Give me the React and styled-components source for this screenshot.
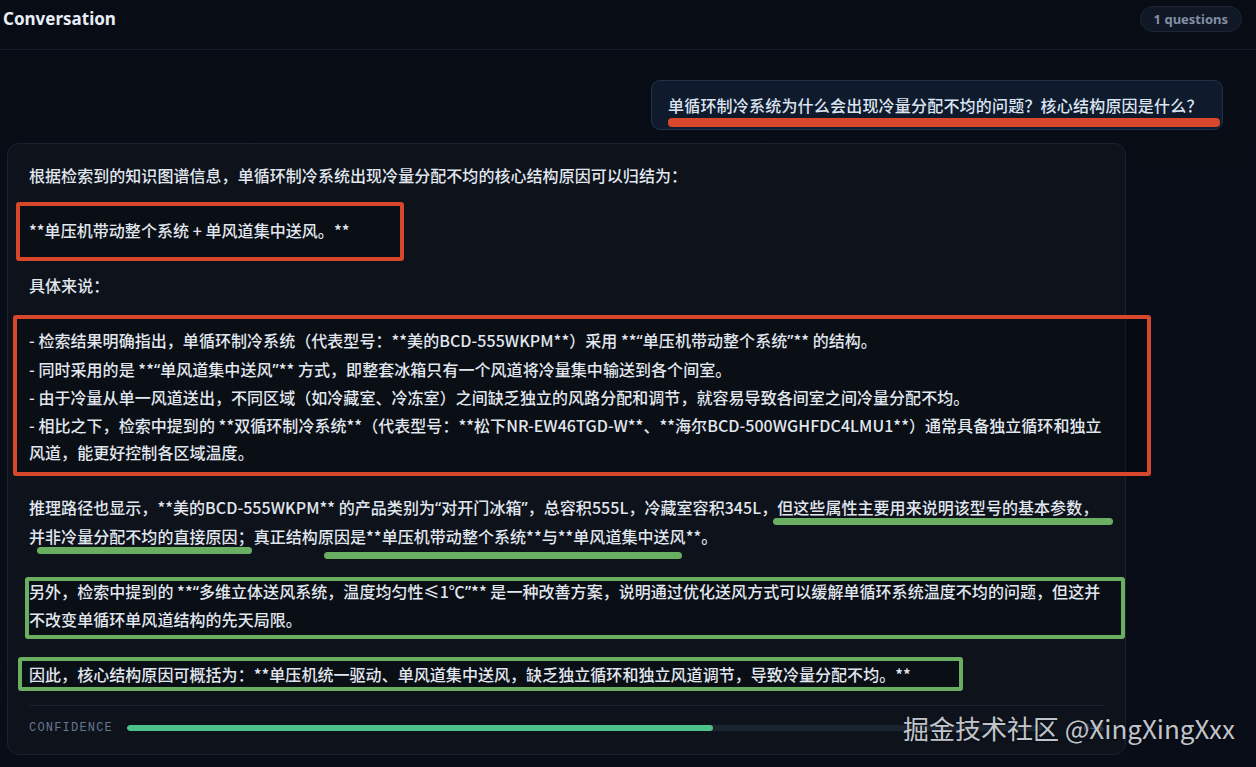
import styled, { createGlobalStyle } from 'styled-components'

const GlobalStyle = createGlobalStyle`
  html, body {
    margin: 0;
    padding: 0;
    background: #080c15;
  }
  body {
    font-family: "Noto Sans CJK SC", "Noto Sans", sans-serif;
    color: #e1e7ef;
  }
`

const Page = styled.div`
  position: relative;
  min-height: 767px;
  overflow: hidden;
  background: linear-gradient(180deg, #080c15 0%, #090d17 100%);
`

const Header = styled.header`
  height: 50px;
  display: flex;
  align-items: center;
  justify-content: space-between;
  padding: 0 14px 12px 3px;
  border-bottom: 1px solid #151c28;
  box-sizing: border-box;
`

const Title = styled.h1`
  margin: 0;
  font-family: "Noto Sans", "Open Sans", sans-serif;
  font-size: 17px;
  font-weight: 700;
  color: #e8eef7;
`

const Badge = styled.span`
  height: 26px;
  display: inline-flex;
  align-items: center;
  padding: 0 13px;
  box-sizing: border-box;
  border-radius: 13px;
  background: #101725;
  border: 1px solid #1c2536;
  color: #8290a7;
  font-family: "Noto Sans", "Open Sans", sans-serif;
  font-size: 13px;
  font-weight: 700;
`

const Thread = styled.main`
  display: flex;
  flex-direction: column;
  gap: 13px;
  padding: 30px 33px 0 7px;
`

const UserBubble = styled.div`
  position: relative;
  align-self: flex-end;
  height: 50px;
  display: flex;
  align-items: center;
  padding: 0 16px;
  box-sizing: border-box;
  width: 572px;
  border-radius: 9px;
  background: #0f1a2d;
  border: 1px solid #21314a;
  color: #dbe4f1;
  font-size: 16px;
  font-weight: 500;
  letter-spacing: 0.2px;
`

const Card = styled.section`
  margin-right: 97px;
  border: 1px solid #1a2230;
  border-radius: 12px;
  background: #0d121b;
  padding: 18px 21px 0 21px;
  min-height: 611px;
  box-sizing: border-box;
  display: flex;
  flex-direction: column;
`

const Para = styled.div`
  position: relative;
  isolation: isolate;
  margin: 0 0 ${p => p.$gap ?? 27.5}px;
  font-size: 16px;
  font-weight: 500;
  letter-spacing: 0.05px;
  line-height: 27.5px;
  white-space: nowrap;
  color: #e1e7ef;
`

// latin curly quotes, narrower than the CJK full-width ones
const Q = styled.span`
  font-family: "Noto Sans", "Liberation Sans", sans-serif;
`

const Frame = styled.span`
  position: absolute;
  z-index: -1;
  top: ${p => p.$top}px;
  bottom: ${p => p.$bottom}px;
  left: ${p => p.$left}px;
  ${p => (p.$width ? `width: ${p.$width}px;` : `right: ${p.$right}px;`)}
  border: 4px solid ${p => p.$color};
  border-radius: 3px;
  background: rgba(0, 0, 0, 0.22);
  pointer-events: none;
`

const Stroke = styled.span`
  position: absolute;
  top: ${p => p.$top}px;
  left: ${p => p.$left}px;
  width: ${p => p.$width}px;
  height: 7px;
  border-radius: 4px;
  background: ${p => p.$color};
  pointer-events: none;
`

const BubbleStroke = styled.span`
  position: absolute;
  left: 16px;
  right: 2px;
  bottom: 2px;
  height: 9px;
  border-radius: 4px;
  background: #d8482c;
`

const Footer = styled.div`
  border-top: 1px solid #19212e;
  padding: 13px 1px 17px 0;
  display: flex;
  align-items: center;
  gap: 14px;
`

const MetaLabel = styled.span`
  font-family: "Liberation Mono", "DejaVu Sans Mono", monospace;
  font-size: 12px;
  letter-spacing: 1.2px;
  color: #66768f;
  line-height: 18px;
`

const Track = styled.div`
  flex: 1;
  height: 6px;
  border-radius: 3px;
  background: #1c2430;
  overflow: hidden;
`

const Fill = styled.div`
  height: 100%;
  border-radius: 3px;
  background: #4cc28a;
`

const Percent = styled.span`
  margin-left: 20px;
  font-family: "Liberation Mono", "DejaVu Sans Mono", monospace;
  font-size: 11px;
  color: #4b5b75;
  width: 26px;
  text-align: right;
`

const Watermark = styled.div`
  position: absolute;
  right: 21px;
  top: 710px;
  font-family: "Noto Sans CJK SC", "Noto Sans", sans-serif;
  font-size: 26px;
  line-height: 36px;
  color: rgba(236, 240, 246, 0.82);
  text-shadow: 0 0 2px rgba(0, 0, 0, 0.5);
  white-space: nowrap;
  pointer-events: none;
`

const RED = '#d6472b'
const GREEN = '#6aae62'
const confidence = 0.64

export default function App() {
  return (
    <>
      <GlobalStyle />
      <Page>
        <Header>
          <Title>Conversation</Title>
          <Badge>1 questions</Badge>
        </Header>
        <Thread>
          <UserBubble>
            单循环制冷系统为什么会出现冷量分配不均的问题？核心结构原因是什么？
            <BubbleStroke />
          </UserBubble>

          <Card>
            <Para>根据检索到的知识图谱信息，单循环制冷系统出现冷量分配不均的核心结构原因可以归结为：</Para>

            <Para>
              <Frame $color={RED} $top={-15} $bottom={-16} $left={-13} $width={380} />
              **单压机带动整个系统 + 单风道集中送风。**
            </Para>

            <Para>具体来说：</Para>

            <Para>
              <Frame $color={RED} $top={-12} $bottom={-9} $left={-16} $right={-47} />
              - 检索结果明确指出，单循环制冷系统（代表型号：**美的BCD-555WKPM**）采用 **<Q>“</Q>单压机带动整个系统<Q>”</Q>** 的结构。<br />
              - 同时采用的是 **<Q>“</Q>单风道集中送风<Q>”</Q>** 方式，即整套冰箱只有一个风道将冷量集中输送到各个间室。<br />
              - 由于冷量从单一风道送出，不同区域（如冷藏室、冷冻室）之间缺乏独立的风路分配和调节，就容易导致各间室之间冷量分配不均。<br />
              - 相比之下，检索中提到的 **双循环制冷系统**（代表型号：**松下NR-EW46TGD-W**、**海尔BCD-500WGHFDC4LMU1**）通常具备独立循环和独立<br />
              风道，能更好控制各区域温度。
            </Para>

            <Para>
              推理路径也显示，**美的BCD-555WKPM** 的产品类别为<Q>“</Q>对开门冰箱<Q>”</Q>，总容积555L，冷藏室容积345L，但这些属性主要用来说明该型号的基本参数，<br />
              并非冷量分配不均的直接原因；真正结构原因是**单压机带动整个系统**与**单风道集中送风**。
              <Stroke $color={GREEN} $top={24} $left={744} $width={340} />
              <Stroke $color={GREEN} $top={53} $left={8} $width={215} />
              <Stroke $color={GREEN} $top={58} $left={295} $width={358} />
            </Para>

            <Para>
              <Frame $color={GREEN} $top={-1} $bottom={-5} $left={-4} $right={-21} />
              另外，检索中提到的 **<Q>“</Q>多维立体送风系统，温度均匀性≤1℃<Q>”</Q>** 是一种改善方案，说明通过优化送风方式可以缓解单循环系统温度不均的问题，但这并<br />
              不改变单循环单风道结构的先天局限。
            </Para>

            <Para $gap={16}>
              <Frame $color={GREEN} $top={-4} $bottom={-2} $left={-11} $width={937} />
              因此，核心结构原因可概括为：**单压机统一驱动、单风道集中送风，缺乏独立循环和独立风道调节，导致冷量分配不均。**
            </Para>

            <Footer>
              <MetaLabel>CONFIDENCE</MetaLabel>
              <Track>
                <Fill style={{ width: `${confidence * 100}%` }} />
              </Track>
              <Percent>{Math.round(confidence * 100)}%</Percent>
            </Footer>
          </Card>
        </Thread>
        <Watermark>掘金技术社区 @XingXingXxx</Watermark>
      </Page>
    </>
  )
}
